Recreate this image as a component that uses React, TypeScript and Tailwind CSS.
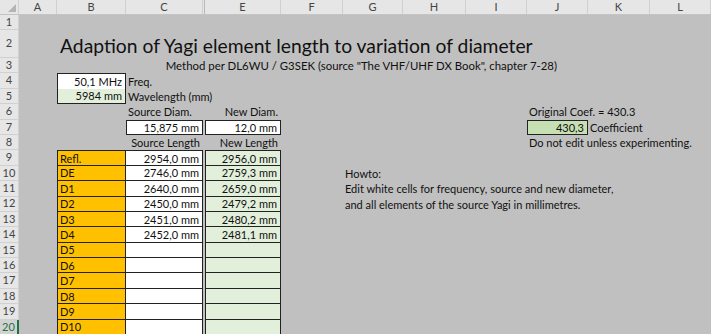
import React from "react";

type CellSpec = { cls?: string; content?: React.ReactNode };

const W = [
  "w-[38px]",
  "w-[69px]",
  "w-[77px]",
  "w-[2px]",
  "w-[76px]",
  "w-[62px]",
  "w-[60px]",
  "w-[63px]",
  "w-[61px]",
  "w-[61px]",
  "w-[62px]",
  "w-[61px]",
];
const LETTERS = ["A", "B", "C", "", "E", "F", "G", "H", "I", "J", "K", "L"];

const L = "justify-start pl-[2px]";
const R = "justify-end pr-[3px]";
const box = "border border-[#222]";

function Row({
  n,
  h,
  cells,
  sel,
}: {
  n: number;
  h: string;
  cells: Record<number, CellSpec>;
  sel?: boolean;
}) {
  return (
    <div className={"flex shrink-0 " + h}>
      <div
        className={
          sel
            ? "w-[19px] shrink-0 flex items-center justify-center bg-[#d2d2d2] border-b border-[#c8c8c8] border-r-2 border-r-[#217346] text-[11px] text-[#217346]"
            : "w-[19px] shrink-0 flex items-center justify-center bg-[#e6e6e6] border-b border-r border-[#d0d0d0] text-[11px] text-[#444]"
        }
      >
        {n}
      </div>
      {W.map((w, i) => {
        const c = cells[i];
        return (
          <div
            key={i}
            className={
              "shrink-0 flex items-center whitespace-nowrap " + w + " " + (c?.cls ?? "")
            }
          >
            {c?.content !== undefined ? <span className="leading-none">{c.content}</span> : null}
          </div>
        );
      })}
    </div>
  );
}

const tableRows: { label: string; src: string; dst: string }[] = [
  { label: "Refl.", src: "2954,0 mm", dst: "2956,0 mm" },
  { label: "DE", src: "2746,0 mm", dst: "2759,3 mm" },
  { label: "D1", src: "2640,0 mm", dst: "2659,0 mm" },
  { label: "D2", src: "2450,0 mm", dst: "2479,2 mm" },
  { label: "D3", src: "2451,0 mm", dst: "2480,2 mm" },
  { label: "D4", src: "2452,0 mm", dst: "2481,1 mm" },
  { label: "D5", src: "", dst: "" },
  { label: "D6", src: "", dst: "" },
  { label: "D7", src: "", dst: "" },
  { label: "D8", src: "", dst: "" },
  { label: "D9", src: "", dst: "" },
  { label: "D10", src: "", dst: "" },
];

const howto: Record<number, string> = {
  10: "Howto:",
  11: "Edit white cells for frequency, source and new diameter,",
  12: "and all elements of the source Yagi in millimetres.",
};

export default function App() {
  return (
    <div className="w-[711px] h-[334px] overflow-hidden bg-[#c0c0c0] font-[family-name:Lato,sans-serif] text-[11px] text-[#111] flex flex-col">
      {/* column header */}
      <div className="flex h-[15px] shrink-0 bg-[#e6e6e6] border-b border-[#c4c4c4]">
        <div className="w-[19px] shrink-0 relative border-r border-[#d0d0d0]">
          <div className="absolute right-[2px] bottom-[2px] w-0 h-0 border-l-[8px] border-l-transparent border-b-[8px] border-b-[#b4b4b4]" />
        </div>
        {W.map((w, i) =>
          i === 3 ? (
            <div key={i} className={"shrink-0 border-r border-[#b8b8b8] " + w} />
          ) : (
            <div
              key={i}
              className={
                "shrink-0 flex items-center justify-center border-r border-[#d0d0d0] text-[11px] text-[#444] " + w
              }
            >
              {LETTERS[i]}
            </div>
          )
        )}
      </div>

      <Row n={1} h="h-[15.4px]" cells={{}} />
      <Row
        n={2}
        h="h-[27.6px]"
        cells={{
          1: { cls: L + " pl-[3px] pt-[3px] text-[19.3px]", content: "Adaption of Yagi element length to variation of diameter" },
        }}
      />
      <Row
        n={3}
        h="h-[15.4px]"
        cells={{
          9: { cls: "justify-end pr-[31px] text-[11.4px]", content: 'Method per DL6WU / G3SEK (source "The VHF/UHF DX Book", chapter 7-28)' },
        }}
      />
      <Row
        n={4}
        h="h-[15.4px]"
        cells={{
          1: { cls: R + " bg-white border-t border-l border-r border-[#222]", content: "50,1 MHz" },
          2: { cls: L, content: "Freq." },
        }}
      />
      <Row
        n={5}
        h="h-[15.4px]"
        cells={{
          1: { cls: R + " bg-[#e2efda] border-b border-l border-r border-[#222]", content: "5984 mm" },
          2: { cls: L, content: "Wavelength (mm)" },
        }}
      />
      <Row
        n={6}
        h="h-[15.4px]"
        cells={{
          2: { cls: L, content: "Source Diam." },
          4: { cls: R, content: "New Diam." },
          9: { cls: L, content: "Original Coef. = 430.3" },
        }}
      />
      <Row
        n={7}
        h="h-[15.4px]"
        cells={{
          2: { cls: R + " bg-white " + box, content: "15,875 mm" },
          4: { cls: R + " bg-white " + box, content: "12,0 mm" },
          9: { cls: R + " bg-[#c6e0b4] " + box, content: "430,3" },
          10: { cls: L, content: "Coefficient" },
        }}
      />
      <Row
        n={8}
        h="h-[15.4px]"
        cells={{
          2: { cls: R, content: "Source Length" },
          4: { cls: R, content: "New Length" },
          9: { cls: L, content: "Do not edit unless experimenting." },
        }}
      />
      {tableRows.map((r, i) => {
        const n = 9 + i;
        const top = i === 0 ? " border-t" : "";
        const cells: Record<number, CellSpec> = {
          1: { cls: L + " bg-[#ffc000] border-l border-r border-b border-[#222]" + top, content: r.label },
          2: { cls: R + " bg-white border-r border-b border-[#222]" + top, content: r.src },
          4: { cls: R + " bg-[#e2efda] border-l border-r border-b border-[#222]" + top, content: r.dst },
        };
        if (howto[n]) cells[6] = { cls: L, content: howto[n] };
        return <Row key={n} n={n} h="h-[15.4px]" cells={cells} sel={n === 20} />;
      })}
    </div>
  );
}
